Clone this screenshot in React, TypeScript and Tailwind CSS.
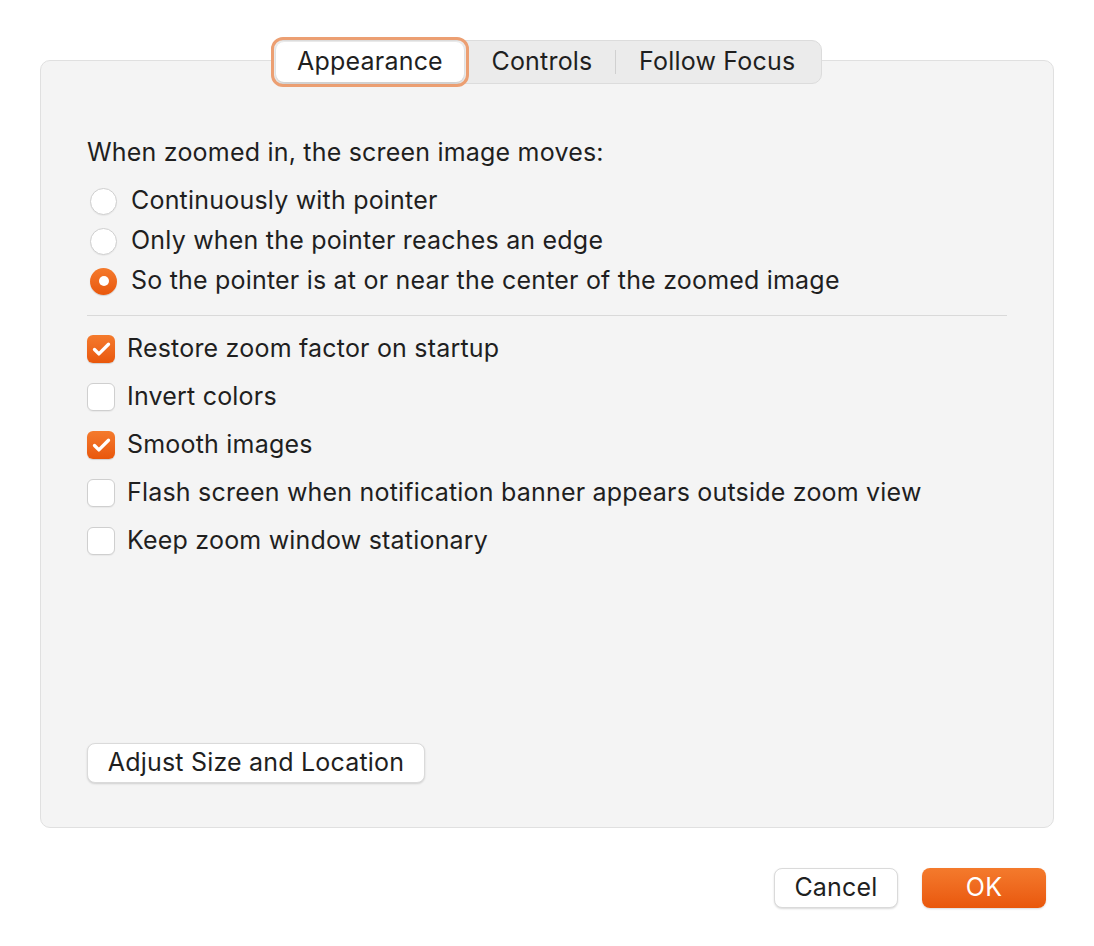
import { Check } from 'lucide-react'

const radios = [
  { label: 'Continuously with pointer', on: false },
  { label: 'Only when the pointer reaches an edge', on: false },
  { label: 'So the pointer is at or near the center of the zoomed image', on: true },
]

const checks = [
  { label: 'Restore zoom factor on startup', on: true },
  { label: 'Invert colors', on: false },
  { label: 'Smooth images', on: true },
  { label: 'Flash screen when notification banner appears outside zoom view', on: false },
  { label: 'Keep zoom window stationary', on: false },
]

function Radio({ on }: { on: boolean }) {
  if (on) {
    return (
      <span className="flex h-[27px] w-[27px] items-center justify-center rounded-full bg-gradient-to-b from-[#f47a2c] to-[#e9570a] shadow-[0_1px_1px_rgba(0,0,0,0.15)]">
        <span className="h-[10px] w-[10px] rounded-full bg-white" />
      </span>
    )
  }
  return <span className="h-[27px] w-[27px] rounded-full border border-[#cfcfcf] bg-white shadow-[0_1px_1px_rgba(0,0,0,0.05)]" />
}

function Checkbox({ on }: { on: boolean }) {
  if (on) {
    return (
      <span className="flex h-[28px] w-[28px] items-center justify-center rounded-[6px] bg-gradient-to-b from-[#f47a2c] to-[#e9570a] shadow-[0_1px_1px_rgba(0,0,0,0.15)]">
        <Check className="h-[21px] w-[21px] text-white" strokeWidth={3.8} />
      </span>
    )
  }
  return <span className="h-[28px] w-[28px] rounded-[6px] border border-[#cfcfcf] bg-white shadow-[0_1px_1px_rgba(0,0,0,0.05)]" />
}

export default function App() {
  return (
    <div
      className="h-[946px] w-[1094px] bg-white text-[25px] tracking-[0.2px] text-[#1f1f1f]"
      style={{ fontFamily: 'Inter, "Noto Sans", sans-serif' }}
    >
      <div className="px-[40px] pt-[37px]">
        {/* Tabs */}
        <div className="relative z-10 flex h-[50px] items-center pl-[231px]">
          <div className="flex h-[44px] items-center rounded-[10px] border border-[#dcdcdc] bg-[#ebebeb]">
            <div className="ml-[-1px] rounded-[12px] border-[3px] border-[#ec9f72] p-[2px]">
              <div className="flex h-[40px] w-[188px] items-center justify-center rounded-[8px] bg-white shadow-[0_1px_2px_rgba(0,0,0,0.15)]">
                Appearance
              </div>
            </div>
            <div className="w-[146px] text-center">Controls</div>
            <div className="h-[24px] w-px bg-[#d0d0d0]" />
            <div className="pr-[26px] pl-[23px]">Follow Focus</div>
          </div>
        </div>

        {/* Panel */}
        <div className="mt-[-27px] flex h-[768px] flex-col rounded-[10px] border border-[#e0e0e0] bg-[#f4f4f4] px-[46px] pt-[76px] pb-[44px]">
          <div className="leading-[30px]">When zoomed in, the screen image moves:</div>
          <div className="mt-[14px] flex flex-col">
            {radios.map((r) => (
              <div key={r.label} className="flex h-[40px] items-center gap-[14px] pl-[3px]">
                <Radio on={r.on} />
                <span>{r.label}</span>
              </div>
            ))}
          </div>
          <div className="mt-[14px] h-px w-[920px] bg-[#d9d9d9]" />
          <div className="mt-[9px] flex flex-col">
            {checks.map((c) => (
              <div key={c.label} className="flex h-[48px] items-center gap-[12px]">
                <Checkbox on={c.on} />
                <span>{c.label}</span>
              </div>
            ))}
          </div>
          <div className="flex-1" />
          <div>
            <button className="flex h-[40px] w-[338px] items-center justify-center rounded-[8px] border border-[#dadada] bg-white shadow-[0_1px_2px_rgba(0,0,0,0.15)]">
              Adjust Size and Location
            </button>
          </div>
        </div>

        {/* Footer */}
        <div className="mt-[40px] flex justify-end gap-[24px] pr-[8px]">
          <button className="flex h-[40px] w-[124px] items-center justify-center rounded-[8px] border border-[#dadada] bg-white shadow-[0_1px_2px_rgba(0,0,0,0.15)]">
            Cancel
          </button>
          <button className="flex h-[40px] w-[124px] items-center justify-center rounded-[8px] bg-gradient-to-b from-[#f47a2c] to-[#e9570a] text-white shadow-[0_1px_2px_rgba(0,0,0,0.15)]">
            OK
          </button>
        </div>
      </div>
    </div>
  )
}
